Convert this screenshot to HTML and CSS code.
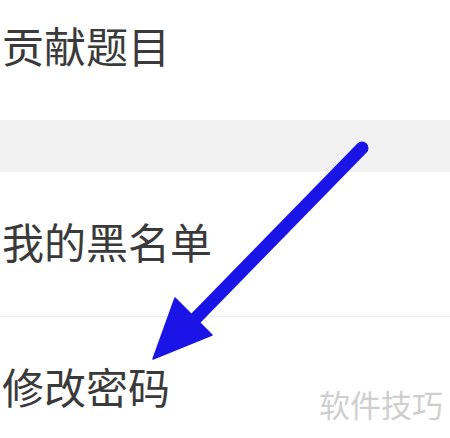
FILE: index.html
```html
<!DOCTYPE html>
<html lang="zh-CN">
<head>
  <meta charset="UTF-8" />
  <meta name="viewport" content="width=device-width, initial-scale=1.0">
  <title>设置</title>
  <link rel="stylesheet" href="styles.css">
</head>
<body>
  <div class="page">
    <div class="item item-first">贡献题目</div>
    <div class="gap"></div>
    <div class="item">我的黑名单</div>
    <div class="item item-last">修改密码</div>

    <!-- 标注箭头 -->
    <svg class="arrow" width="450" height="438" viewBox="0 0 450 438">
      <line x1="362" y1="148" x2="196" y2="318" stroke="#1a14e6" stroke-width="13" stroke-linecap="round" />
      <polygon points="153,359 175,298 212,335" fill="#1a14e6" stroke="#1a14e6" stroke-width="1.5" stroke-linejoin="round" />
    </svg>

    <div class="watermark">软件技巧</div>
  </div>
</body>
</html>
```

FILE: styles.css
```css
body {
  margin: 0;
  font-family: "Noto Sans CJK SC", "Noto Sans", sans-serif;
  background: white;
  color: #3a3a3a;
}
.page {
  position: relative;
  width: 450px;
  height: 438px;
  overflow: hidden;
}
.item {
  display: flex;
  align-items: center;
  height: 144px;
  box-sizing: border-box;
  padding: 0 0 6px 2px;
  font-size: 42px;
  line-height: 1;
}
.item-first {
  height: 120px;
  padding-bottom: 30px;
}
.item-last {
  border-top: 1px solid #ececec;
}
.gap {
  height: 52px;
  background: #f2f2f2;
}
.arrow {
  position: absolute;
  left: 0;
  top: 0;
}
.watermark {
  position: absolute;
  right: 7px;
  top: 388px;
  font-size: 31px;
  line-height: 1;
  color: #cfcfcf;
}
```
